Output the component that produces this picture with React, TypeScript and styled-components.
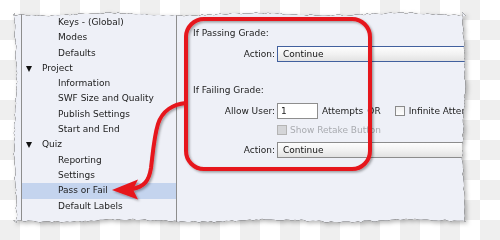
import React from "react";
import styled, { createGlobalStyle } from "styled-components";

const GlobalStyle = createGlobalStyle`
  body {
    margin: 0;
    font-family: "DejaVu Sans", Verdana, sans-serif;
  }
`;

// jagged "torn paper" outline, computed once
function tornEdge(w: number, h: number) {
  let seed = 11;
  const rnd = () => {
    seed = (seed * 9301 + 49297) % 233280;
    return seed / 233280;
  };
  // a slow wobble plus fine noise
  const depth = (t: number, phase: number) =>
    1.6 + 1.2 * Math.sin(t / 23 + phase) + rnd() * 1.6;
  const pts: [number, number][] = [];
  const step = 3;
  for (let x = 0; x <= w; x += step) pts.push([x, depth(x, 0.4)]);
  for (let y = 0; y <= h; y += step) pts.push([w - depth(y, 1.7), y]);
  for (let x = w; x >= 0; x -= step) pts.push([x, h - depth(x, 2.9)]);
  for (let y = h; y >= 0; y -= step) pts.push([depth(y, 5.1), y]);
  return `polygon(${pts
    .map(([x, y]) => `${x.toFixed(1)}px ${y.toFixed(1)}px`)
    .join(", ")})`;
}

const TORN = tornEdge(453, 211);

const Page = styled.div`
  position: relative;
  width: 500px;
  height: 240px;
  overflow: hidden;
  box-sizing: border-box;
  padding: 12px 0 0 13px;
  background-color: #fff;
  background-image: conic-gradient(
    #efefef 25%,
    #fff 0 50%,
    #efefef 0 75%,
    #fff 0
  );
  background-size: 40px 40px;
`;

const Shadow = styled.div`
  width: 453px;
  height: 211px;
  filter: drop-shadow(0 0 0.6px #555) drop-shadow(0 0 0.4px #666)
    drop-shadow(2px 2px 2px rgba(0, 0, 0, 0.28));
`;

const Card = styled.div`
  width: 100%;
  height: 100%;
  box-sizing: border-box;
  padding-left: 8px;
  display: flex;
  overflow: hidden;
  background: #eef0f7;
  clip-path: ${TORN};
  font-size: 9px;
  color: #1c1c1c;
`;

const Tree = styled.div`
  width: 154px;
  flex: none;
  padding-top: 3px;
  border-left: 1px solid #8d8d8d;
  border-right: 1px solid #8d8d8d;
`;

const TreeRow = styled.div<{ $level: number; $selected?: boolean }>`
  height: 15.3px;
  line-height: 15.3px;
  display: flex;
  align-items: center;
  white-space: nowrap;
  padding-left: ${(p) => (p.$level === 1 ? "4px" : "36px")};
  background: ${(p) => (p.$selected ? "#c4d4ee" : "transparent")};
`;

const Caret = styled.span`
  width: 0;
  height: 0;
  margin-right: 10px;
  border-left: 3px solid transparent;
  border-right: 3px solid transparent;
  border-top: 6px solid #111;
`;

const Panel = styled.div`
  flex: 1;
  display: flex;
  flex-direction: column;
  padding: 13.5px 0 0 16px;
  min-width: 0;
`;

const SectionTitle = styled.div<{ $gap: number }>`
  height: 15px;
  line-height: 15px;
  margin-top: ${(p) => p.$gap}px;
  white-space: nowrap;
`;

const FieldRow = styled.div<{ $gap: number; $h: number }>`
  display: flex;
  align-items: center;
  height: ${(p) => p.$h}px;
  margin-top: ${(p) => p.$gap}px;
  white-space: nowrap;
`;

const Label = styled.span`
  width: 82px;
  flex: none;
  margin-right: 2px;
  text-align: right;
`;

const Indent = styled.span`
  width: 84px;
  flex: none;
`;

const Dropdown = styled.div<{ $focused?: boolean }>`
  width: 240px;
  flex: none;
  height: 16px;
  box-sizing: border-box;
  padding-left: 5px;
  line-height: 14px;
  border: 1px solid ${(p) => (p.$focused ? "#41609e" : "#8c8c8c")};
  background: linear-gradient(#fdfdfd, #f2f2f2 50%, #e2e2e2);
  color: #111;
`;

const NumberInput = styled.div`
  width: 41px;
  height: 16px;
  box-sizing: border-box;
  flex: none;
  padding-left: 3px;
  line-height: 14px;
  border: 1px solid #8e8e8e;
  background: #fff;
`;

const Text = styled.span<{ $ml?: number; $muted?: boolean }>`
  margin-left: ${(p) => p.$ml ?? 0}px;
  color: ${(p) => (p.$muted ? "#a9abb0" : "inherit")};
`;

const CheckBox = styled.span<{ $disabled?: boolean; $ml?: number }>`
  display: inline-block;
  width: 10px;
  height: 10px;
  box-sizing: border-box;
  flex: none;
  margin-left: ${(p) => p.$ml ?? 0}px;
  border: 1px solid ${(p) => (p.$disabled ? "#b4b4b4" : "#8a8a8a")};
  background: ${(p) =>
    p.$disabled ? "#d4d5d8" : "linear-gradient(#f0f0f0, #fdfdfd)"};
`;

const Callout = styled.svg`
  position: absolute;
  left: 0;
  top: 0;
  width: 500px;
  height: 240px;
  pointer-events: none;
  overflow: visible;
`;

type Node = { label: string; level: number; selected?: boolean };

const nodes: Node[] = [
  { label: "Keys - (Global)", level: 2 },
  { label: "Modes", level: 2 },
  { label: "Defaults", level: 2 },
  { label: "Project", level: 1 },
  { label: "Information", level: 2 },
  { label: "SWF Size and Quality", level: 2 },
  { label: "Publish Settings", level: 2 },
  { label: "Start and End", level: 2 },
  { label: "Quiz", level: 1 },
  { label: "Reporting", level: 2 },
  { label: "Settings", level: 2 },
  { label: "Pass or Fail", level: 2, selected: true },
  { label: "Default Labels", level: 2 },
];

function App() {
  return (
    <>
      <GlobalStyle />
      <Page>
        <Shadow>
          <Card>
            <Tree>
              {nodes.map((n) => (
                <TreeRow key={n.label} $level={n.level} $selected={n.selected}>
                  {n.level === 1 && <Caret />}
                  {n.label}
                </TreeRow>
              ))}
            </Tree>
            <Panel>
              <SectionTitle $gap={0}>If Passing Grade:</SectionTitle>
              <FieldRow $gap={5.5} $h={16}>
                <Label>Action:</Label>
                <Dropdown $focused>Continue</Dropdown>
              </FieldRow>

              <SectionTitle $gap={20.5}>If Failing Grade:</SectionTitle>
              <FieldRow $gap={5} $h={16}>
                <Label>Allow User:</Label>
                <NumberInput>1</NumberInput>
                <Text $ml={4}>Attempts</Text>
                <Text $ml={4}>OR</Text>
                <CheckBox $ml={14} />
                <Text $ml={4}>Infinite Attempts</Text>
              </FieldRow>
              <FieldRow $gap={3.5} $h={15}>
                <Indent />
                <CheckBox $disabled />
                <Text $ml={3} $muted>
                  Show Retake Button
                </Text>
              </FieldRow>
              <FieldRow $gap={5} $h={16}>
                <Label>Action:</Label>
                <Dropdown>Continue</Dropdown>
              </FieldRow>
            </Panel>
          </Card>
        </Shadow>

        <Callout viewBox="0 0 500 240">
          <defs>
            <filter id="soft" x="-10%" y="-10%" width="130%" height="130%">
              <feDropShadow dx="1.5" dy="1.5" stdDeviation="1.2" floodColor="#000" floodOpacity="0.35" />
            </filter>
          </defs>
          <g filter="url(#soft)">
            <rect
              x="186"
              y="19"
              width="184"
              height="150"
              rx="18"
              fill="none"
              stroke="#e6141b"
              strokeWidth="4"
            />
            <path
              d="M186 103 C 173 104, 162 111, 158 124 C 154 137, 153 152, 151 168 C 149 181, 144 187, 132 189"
              fill="none"
              stroke="#e6141b"
              strokeWidth="4"
              strokeLinecap="round"
            />
            <polygon points="112,190 138,179.5 133,189.5 138,199.5" fill="#e6141b" />
          </g>
        </Callout>
      </Page>
    </>
  );
}

export default App;
